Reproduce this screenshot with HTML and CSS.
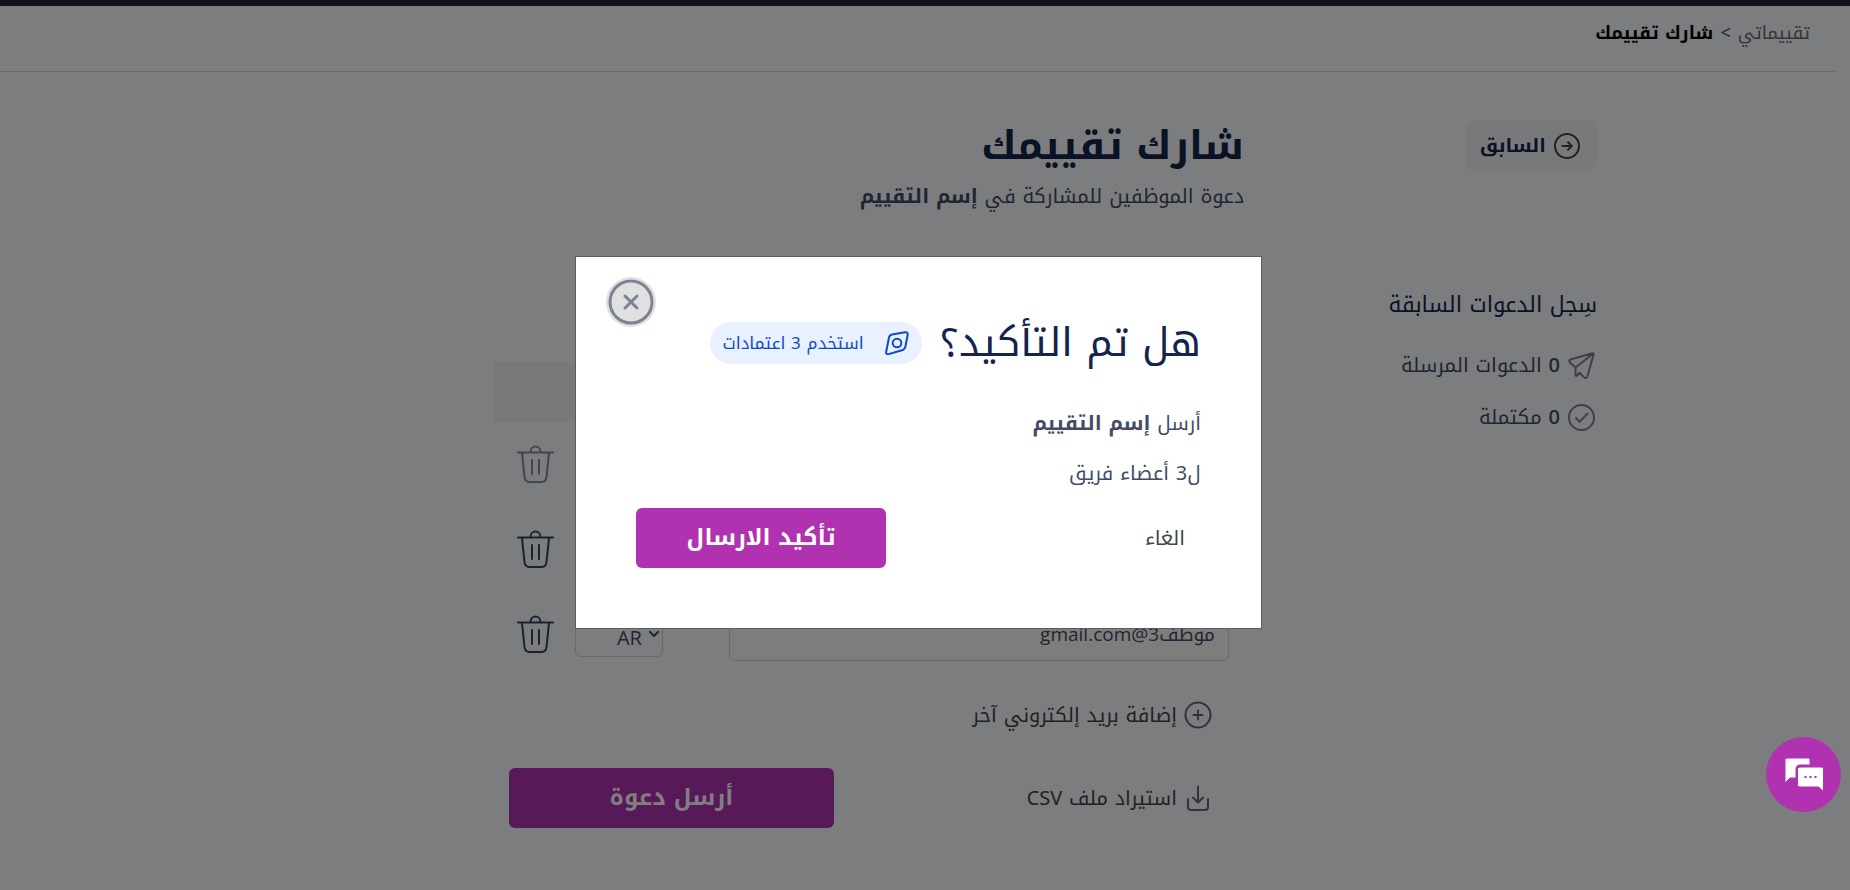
FILE: index.html
```html
<!DOCTYPE html>
<html lang="ar" dir="rtl">
<head>
    <meta charset="UTF-8">
    <meta name="viewport" content="width=device-width, initial-scale=1.0">
    <title>شارك تقييمك</title>
    <link rel="stylesheet" href="styles.css">
</head>
<body>
    <!-- Icons used more than once -->
    <svg class="sprite" aria-hidden="true">
        <symbol id="trash" viewBox="0 0 37 39">
            <path d="M1 7.500H36M5 8l2.500 24c.4 3.500 2 5 5 5h12c3 0 4.600-1.500 5-5L32 8M13.500 7c0-7.300 10-7.300 10 0M15 15v14M22 15v14"/>
        </symbol>
        <symbol id="chevron" viewBox="0 0 10 6">
            <path d="M1 1l4 4 4-4"/>
        </symbol>
    </svg>

    <div class="top-bar"></div>

    <div class="page">
        <nav class="breadcrumb">
            <a href="#">تقييماتي</a>
            <span class="separator">&gt;</span>
            <strong>شارك تقييمك</strong>
        </nav>

        <div class="container">
            <aside class="sidebar">
                <button type="button" class="back-btn">
                    <svg width="26" height="26" viewBox="0 0 26 26"><circle cx="13" cy="13" r="12"/><path d="M8.500 13h9M14 9.200l3.800 3.800-3.800 3.800"/></svg>
                    السابق
                </button>

                <h2>سِجل الدعوات السابقة</h2>
                <ul class="history">
                    <li>
                        <svg width="27" height="27" viewBox="0 0 27 27"><path d="M24.500 1.200L2.500 7.500c-1.400.4-1.700 1.800-.6 2.900l5.600 5.100v7.600c0 .9.700 1.200 1.300.6l2.800-2.900 4.600 4.600c1.200 1.200 2.600.8 3.100-.7l6.200-22c.2-1-.2-1.600-1-1.400zM7.500 15.500L25 1.800"/></svg>
                        <span><b>0</b> الدعوات المرسلة</span>
                    </li>
                    <li>
                        <svg width="27" height="27" viewBox="0 0 27 27"><circle cx="13.500" cy="13.500" r="12.500"/><path d="M8 14l3.500 3.800 8-8"/></svg>
                        <span><b>0</b> مكتملة</span>
                    </li>
                </ul>
            </aside>

            <main class="content">
                <h1>شارك تقييمك</h1>
                <p class="subtitle">دعوة الموظفين للمشاركة في <strong>إسم التقييم</strong></p>

                <div class="list-header"></div>

                <div class="row">
                    <input type="text" value="موظف1@gmail.com" aria-label="البريد الإلكتروني 1">
                    <div class="lang">
                        <select aria-label="اللغة 1"><option>AR</option></select>
                        <svg width="10" height="6"><use href="#chevron"/></svg>
                    </div>
                    <button type="button" class="delete muted" aria-label="حذف 1"><svg width="37" height="39"><use href="#trash"/></svg></button>
                </div>
                <div class="row">
                    <input type="text" value="موظف2@gmail.com" aria-label="البريد الإلكتروني 2">
                    <div class="lang">
                        <select aria-label="اللغة 2"><option>AR</option></select>
                        <svg width="10" height="6"><use href="#chevron"/></svg>
                    </div>
                    <button type="button" class="delete" aria-label="حذف 2"><svg width="37" height="39"><use href="#trash"/></svg></button>
                </div>
                <div class="row">
                    <input type="text" value="موظف3@gmail.com" aria-label="البريد الإلكتروني 3">
                    <div class="lang">
                        <select aria-label="اللغة 3"><option>AR</option></select>
                        <svg width="10" height="6"><use href="#chevron"/></svg>
                    </div>
                    <button type="button" class="delete" aria-label="حذف 3"><svg width="37" height="39"><use href="#trash"/></svg></button>
                </div>

                <button type="button" class="text-btn add-email">
                    <svg width="28" height="28" viewBox="0 0 28 28"><circle cx="14" cy="14" r="12.500"/><path d="M14 9.500v9M9.500 14h9"/></svg>
                    إضافة بريد إلكتروني آخر
                </button>

                <div class="actions">
                    <button type="button" class="text-btn">
                        <svg width="28" height="28" viewBox="0 0 28 28"><path d="M14 2.500v16M9 13.500l5 5 5-5M4 15v8c0 2 1 3 3 3h14c2 0 3-1 3-3v-8"/></svg>
                        استيراد ملف CSV
                    </button>
                    <button type="button" class="btn send">أرسل دعوة</button>
                </div>
            </main>
        </div>
    </div>

    <!-- Confirmation dialog -->
    <div class="overlay">
        <div class="modal" role="dialog" aria-modal="true" aria-labelledby="modalTitle">
            <button type="button" class="close" aria-label="إغلاق">
                <svg width="46" height="46" viewBox="0 0 46 46"><circle cx="23" cy="23" r="21"/><path d="M17 17l12 12M29 17L17 29"/></svg>
            </button>
            <div class="modal-head">
                <h2 id="modalTitle">هل تم التأكيد؟</h2>
                <span class="credits">
                    <svg width="24" height="24" viewBox="0 0 24 24"><path d="M7 3.500l13-2.300c2-.3 3 .7 2.700 2.600l-2.300 12c-.3 1.500-1.100 2.500-2.600 3.200L3.500 23.100c-1.700.5-2.600-.4-2.300-2.200L4 6.500c.4-1.600 1.300-2.700 3-3z"/><circle cx="12" cy="12" r="4.300"/></svg>
                    استخدم 3 اعتمادات
                </span>
            </div>
            <p>أرسل <strong>إسم التقييم</strong></p>
            <p>ل3 أعضاء فريق</p>
            <div class="modal-actions">
                <button type="button" class="cancel">الغاء</button>
                <button type="button" class="btn confirm">تأكيد الارسال</button>
            </div>
        </div>
    </div>

    <button type="button" class="chat" aria-label="الدردشة">
        <svg width="40" height="36" viewBox="0 0 40 36">
            <path class="bubble" d="M3 1h21c1.500 0 2 .6 2 2v5H16c-2.500 0-4 1.500-4 4v9H6l-5 5V3c0-1.400.6-2 2-2z"/>
            <path class="bubble" d="M16 10h21c1.500 0 2.500.7 2.500 2v22.500L34.500 30H16c-1.700 0-2.500-1-2.500-2.500v-15c0-1.600.9-2.500 2.500-2.500z"/>
            <path class="dots" d="M20.500 19h2v2h-2zM25.500 19h2v2h-2zM30.500 19h2v2h-2z"/>
        </svg>
    </button>
</body>
</html>
```
FILE: styles.css
```css
* {
    margin: 0;
    padding: 0;
    box-sizing: border-box;
}

body {
    background: #f8fafc;
    color: #424b66;
    font-family: "Noto Kufi Arabic", "Open Sans", "Noto Sans Arabic", "DejaVu Sans", sans-serif;
    font-size: 20px;
    line-height: 30px;
}

button, input, select {
    font: inherit;
    color: inherit;
    border: none;
    background: none;
}

button {
    cursor: pointer;
}

svg {
    display: block;
    flex: none;
    fill: none;
    stroke: currentColor;
    stroke-width: 2;
    stroke-linecap: round;
    stroke-linejoin: round;
}

.sprite {
    position: absolute;
    width: 0;
    height: 0;
}

.top-bar {
    height: 6px;
    background: #241e34;
}

.page {
    margin-right: 14px;
}

.breadcrumb {
    display: flex;
    align-items: center;
    gap: 7px;
    height: 66px;
    padding: 0 26px 12px;
    border-bottom: 1px solid #d4d6da;
    font-size: 18px;
}

.breadcrumb a {
    color: #6b6b70;
    text-decoration: none;
}

.breadcrumb strong {
    color: #000;
}

.container {
    display: grid;
    grid-template-columns: 26% 750px 1fr;
    max-width: 1358px;
    margin: 0 auto;
    padding-top: 49px;
}

/* Sidebar */
.back-btn {
    display: flex;
    align-items: center;
    gap: 8px;
    height: 50px;
    padding: 0 17px 0 14px;
    border-radius: 6px;
    background: #f1f2f4;
    color: #14244b;
    font-size: 19px;
    font-weight: bold;
}

.back-btn svg {
    color: #444;
}

.sidebar h2 {
    margin: 116px 0 16px;
    color: #14244b;
    font-size: 22px;
    font-weight: normal;
    line-height: 36px;
}

.history {
    list-style: none;
}

.history li {
    display: flex;
    align-items: center;
    gap: 8px;
    height: 52px;
    padding-right: 2px;
}

.history svg {
    color: #807f92;
}

.history b {
    font-weight: 500;
}

/* Main column */
.content h1 {
    color: #14244b;
    font-size: 40px;
    line-height: 50px;
}

.subtitle {
    margin: 10px 0 151px;
}

.list-header {
    height: 60px;
    background: #f2f3f5;
}

.row {
    display: flex;
    align-items: center;
    height: 85px;
    padding: 0 15px 0 23px;
}

.row input {
    flex: 1;
    min-width: 0;
    height: 52px;
    padding: 0 13px;
    border: 1px solid #d1d3d8;
    border-radius: 6px;
    background: #fafdf8;
    font-family: "Open Sans", "Noto Kufi Arabic", sans-serif;
    font-size: 19px;
}

.lang {
    position: relative;
    flex: none;
    width: 88px;
    margin: 0 66px 0 21px;
}

.lang select {
    width: 100%;
    height: 44px;
    padding: 6px 20px 0;
    border: 1px solid #d1d3d8;
    border-radius: 6px;
    appearance: none;
    font-family: "Open Sans", "Noto Kufi Arabic", sans-serif;
}

.lang svg {
    position: absolute;
    top: 18px;
    right: 4px;
}

.delete {
    color: #384260;
}

.delete.muted {
    opacity: 0.6;
}

.text-btn {
    display: flex;
    align-items: center;
    gap: 7px;
    color: #444;
}

.text-btn svg {
    color: #667;
}

.add-email {
    height: 76px;
    margin-right: 32px;
}

.actions {
    display: flex;
    align-items: center;
    justify-content: space-between;
    padding: 15px 32px 15px 15px;
}

.btn {
    height: 60px;
    border-radius: 6px;
    background: #b032b0;
    color: #fff;
    font-size: 23px;
    font-weight: bold;
}

.send {
    width: 325px;
}

/* Confirmation dialog */
.overlay {
    position: fixed;
    inset: 0;
    display: flex;
    align-items: center;
    justify-content: center;
    padding: 0 13px 5px 0;
    background: rgba(0, 0, 0, 0.5);
}

.modal {
    position: relative;
    width: 687px;
    padding: 56px 60px 60px;
    border: 1px solid #5a5c5e;
    background: #fff;
}

.close {
    position: absolute;
    top: 20px;
    left: 30px;
    padding: 2px;
    border-radius: 50%;
    background: #e0e0e0;
    color: #7a8394;
}

.close svg {
    stroke-width: 3;
}

.modal-head {
    display: flex;
    align-items: center;
    gap: 18px;
    margin-bottom: 25px;
}

.modal-head h2 {
    color: #14244b;
    font-size: 40px;
    font-weight: normal;
    line-height: 60px;
}

.credits {
    display: flex;
    align-items: center;
    gap: 21px;
    height: 42px;
    padding: 0 13px;
    border-radius: 21px;
    background: #e9f1ff;
    color: #1048d0;
    font-size: 17px;
}

.modal p {
    line-height: 50px;
}

.modal-actions {
    display: flex;
    align-items: center;
    justify-content: space-between;
    margin-top: 10px;
}

.cancel {
    padding: 0 16px;
    color: #444;
}

.confirm {
    width: 250px;
}

.chat {
    position: fixed;
    right: 9px;
    bottom: 78px;
    display: flex;
    align-items: center;
    justify-content: center;
    width: 75px;
    height: 75px;
    border-radius: 50%;
    background: #b032b0;
}

.bubble {
    fill: #fff;
    stroke: #b032b0;
    stroke-width: 1;
}

.dots {
    fill: #b032b0;
    stroke: none;
}
```
